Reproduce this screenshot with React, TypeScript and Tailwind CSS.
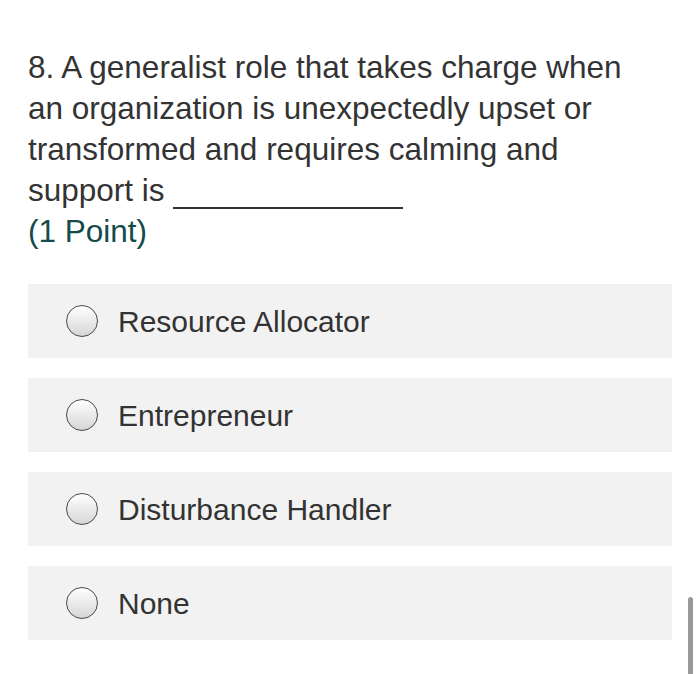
import React from "react";

const options = [
  "Resource Allocator",
  "Entrepreneur",
  "Disturbance Handler",
  "None",
];

const App = () => {
  return (
    <div
      className="relative h-[674px] w-[700px] overflow-hidden bg-white text-[#333333]"
      style={{ fontFamily: '"Liberation Sans", Arial, sans-serif' }}
    >
      <div className="px-[28px] pt-[47px]">
        {/* Question */}
        <div className="whitespace-nowrap text-[31.5px] leading-[41px]">
          8. A generalist role that takes charge when
          <br />
          an organization is unexpectedly upset or
          <br />
          transformed and requires calming and
          <br />
          support is{" "}
          <span className="inline-block h-[2px] w-[230px] bg-[#333333] align-[-8px]"></span>
        </div>
        <div className="text-[31.5px] leading-[41px] text-[#154b4b]">(1 Point)</div>

        {/* Options */}
        <div className="mt-[32px] flex flex-col gap-[20px]">
          {options.map((o) => (
            <div
              key={o}
              className="flex h-[74px] items-center bg-[#f2f2f2] pl-[38px]"
            >
              <span className="h-[32px] w-[32px] shrink-0 rounded-full border-[1.5px] border-[#4a4a4a] bg-gradient-to-b from-white to-[#d6d6d6]"></span>
              <span className="ml-[20px] text-[30px]">{o}</span>
            </div>
          ))}
        </div>
      </div>

      {/* scrollbar */}
      <div className="absolute left-[688px] top-[597px] h-[80px] w-[5px] rounded-full bg-[#9a9a9a]"></div>
    </div>
  );
};

export default App;
